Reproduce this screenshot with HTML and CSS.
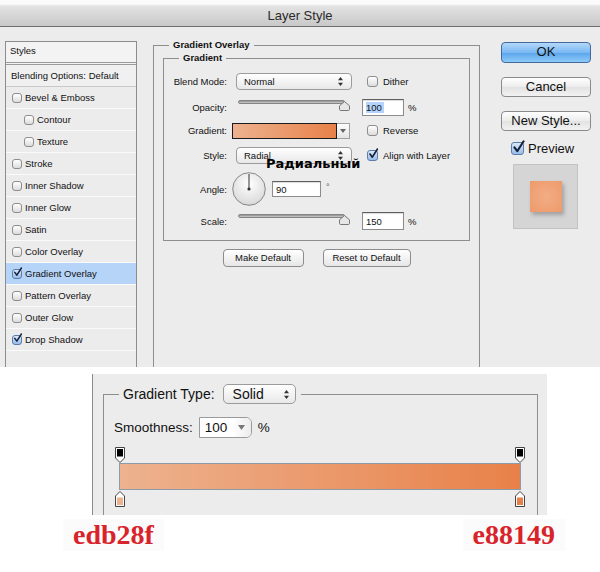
FILE: index.html
```html
<!DOCTYPE html>
<html lang="en">
<head>
    <meta charset="UTF-8">
    <meta name="viewport" content="width=device-width, initial-scale=1.0">
    <title>Layer Style</title>
    <link rel="stylesheet" href="styles.css">
</head>
<body>
    <div class="dialog">
        <div class="titlebar">Layer Style</div>
        <div class="dialog-body">
            <div class="styles-list">
                <div class="list-head">Styles</div>
                <div class="list-blend">Blending Options: Default</div>
                <div class="list-item"><span class="cb"></span>Bevel &amp; Emboss</div>
                <div class="list-item sub"><span class="cb"></span>Contour</div>
                <div class="list-item sub"><span class="cb"></span>Texture</div>
                <div class="list-item"><span class="cb"></span>Stroke</div>
                <div class="list-item"><span class="cb"></span>Inner Shadow</div>
                <div class="list-item"><span class="cb"></span>Inner Glow</div>
                <div class="list-item"><span class="cb"></span>Satin</div>
                <div class="list-item"><span class="cb"></span>Color Overlay</div>
                <div class="list-item selected"><span class="cb on"><svg viewBox="0 0 12 13"><path d="M2.3 7 L5 10.6 L11 1.2"/></svg></span>Gradient Overlay</div>
                <div class="list-item"><span class="cb"></span>Pattern Overlay</div>
                <div class="list-item"><span class="cb"></span>Outer Glow</div>
                <div class="list-item"><span class="cb on"><svg viewBox="0 0 12 13"><path d="M2.3 7 L5 10.6 L11 1.2"/></svg></span>Drop Shadow</div>
            </div>

            <fieldset class="group overlay-group">
                <legend>Gradient Overlay</legend>
                <fieldset class="group gradient-group">
                    <legend>Gradient</legend>

                    <div class="field-row r-blend">
                        <label>Blend Mode:</label>
                        <div class="popup">Normal
                            <svg class="updown" viewBox="0 0 5 9"><path d="M2.5 0 L5 3.2 H0 Z M2.5 9 L5 5.8 H0 Z"/></svg>
                        </div>
                        <div class="check"><span class="cb mid"></span>Dither</div>
                    </div>

                    <div class="field-row r-opacity">
                        <label>Opacity:</label>
                        <div class="slider">
                            <div class="track"></div>
                            <svg class="thumb" viewBox="0 0 11 10"><path d="M5.5 0.5 L10.5 4.8 V8.3 Q10.5 9.5 9.3 9.5 H1.7 Q0.5 9.5 0.5 8.3 V4.8 Z"/></svg>
                        </div>
                        <div class="num"><span class="textbox w-pct"><span class="hl">100</span></span><span>%</span></div>
                    </div>

                    <div class="field-row r-gradient">
                        <label>Gradient:</label>
                        <div class="grad-pick">
                            <span class="swatch"></span>
                            <span class="drop"><svg viewBox="0 0 6 4"><path d="M0 0 H6 L3 4 Z"/></svg></span>
                        </div>
                        <div class="check"><span class="cb mid"></span>Reverse</div>
                    </div>

                    <div class="field-row r-style">
                        <label>Style:</label>
                        <div class="popup">Radial
                            <svg class="updown" viewBox="0 0 5 9"><path d="M2.5 0 L5 3.2 H0 Z M2.5 9 L5 5.8 H0 Z"/></svg>
                        </div>
                        <div class="check"><span class="cb mid on"><svg viewBox="0 0 12 13"><path d="M2.3 7 L5 10.6 L11 1.2"/></svg></span>Align with Layer</div>
                        <span class="annot">Радиальный</span>
                    </div>

                    <div class="field-row r-angle">
                        <label>Angle:</label>
                        <div class="angle">
                            <svg class="dial" viewBox="0 0 34 34">
                                <defs>
                                    <radialGradient id="dialFill" cx="50%" cy="35%" r="65%">
                                        <stop offset="0" stop-color="#ffffff"/>
                                        <stop offset="1" stop-color="#d9d9d9"/>
                                    </radialGradient>
                                </defs>
                                <circle cx="17" cy="17" r="16.3" fill="url(#dialFill)" stroke="#6f6f6f" stroke-width="0.8"/>
                                <line x1="17" y1="17" x2="17" y2="2" stroke="#333" stroke-width="1"/>
                                <circle cx="17" cy="17" r="1.6" fill="#333"/>
                            </svg>
                            <span class="textbox w-angle">90</span>
                            <span class="deg">°</span>
                        </div>
                    </div>

                    <div class="field-row r-scale">
                        <label>Scale:</label>
                        <div class="slider">
                            <div class="track"></div>
                            <svg class="thumb" viewBox="0 0 11 10"><path d="M5.5 0.5 L10.5 4.8 V8.3 Q10.5 9.5 9.3 9.5 H1.7 Q0.5 9.5 0.5 8.3 V4.8 Z"/></svg>
                        </div>
                        <div class="num"><span class="textbox w-pct tall">150</span><span>%</span></div>
                    </div>
                </fieldset>

                <div class="default-btns">
                    <span class="btn-small w-make">Make Default</span>
                    <span class="btn-small w-reset">Reset to Default</span>
                </div>
            </fieldset>

            <div class="side">
                <span class="btn ok">OK</span>
                <span class="btn">Cancel</span>
                <span class="btn">New Style...</span>
                <div class="preview-check"><span class="cb big on"><svg viewBox="0 0 12 13"><path d="M2.3 7 L5 10.6 L11 1.2"/></svg></span>Preview</div>
                <div class="preview-box"><span class="preview-swatch"></span></div>
            </div>
        </div>
    </div>

    <div class="editor">
        <fieldset class="type-group">
            <legend>
                <span>Gradient Type:</span>
                <span class="popup big-popup">Solid
                    <svg class="updown" viewBox="0 0 5 9"><path d="M2.5 0 L5 3.2 H0 Z M2.5 9 L5 5.8 H0 Z"/></svg>
                </span>
            </legend>
            <div class="smooth">
                <span>Smoothness:</span>
                <span class="combo"><span class="combo-val">100</span><span class="combo-arrow"><svg viewBox="0 0 7 5"><path d="M0 0 H7 L3.5 5 Z"/></svg></span></span>
                <span>%</span>
            </div>
            <div class="stops">
                <svg class="stop" viewBox="0 0 10 16"><path d="M0.5 0.5 H9.5 V11 L5 15.5 L0.5 11 Z" fill="#fff" stroke="#444"/><rect x="2" y="2" width="6" height="7.5" fill="#000"/></svg>
                <svg class="stop" viewBox="0 0 10 16"><path d="M0.5 0.5 H9.5 V11 L5 15.5 L0.5 11 Z" fill="#fff" stroke="#444"/><rect x="2" y="2" width="6" height="7.5" fill="#000"/></svg>
            </div>
            <div class="bar"></div>
            <div class="stops low">
                <svg class="stop" viewBox="0 0 10 16"><path d="M5 0.5 L9.5 5 V15.5 H0.5 V5 Z" fill="#fff" stroke="#444"/><rect x="2" y="6.5" width="6" height="7.5" fill="#edb28f"/></svg>
                <svg class="stop" viewBox="0 0 10 16"><path d="M5 0.5 L9.5 5 V15.5 H0.5 V5 Z" fill="#fff" stroke="#444"/><rect x="2" y="6.5" width="6" height="7.5" fill="#e88149"/></svg>
            </div>
        </fieldset>
    </div>

    <div class="hex-row">
        <span class="hex">edb28f</span>
        <span class="hex">e88149</span>
    </div>
</body>
</html>
```

FILE: styles.css
```css
* {
    box-sizing: border-box;
}
body {
    margin: 0;
    width: 600px;
    height: 572px;
    overflow: hidden;
    background-color: #fff;
    font-family: "Liberation Sans", Arial, sans-serif;
    color: #111;
}
.dialog {
    height: 367px;
    background-color: #ececec;
}
.titlebar {
    height: 27px;
    padding-top: 5px;
    border-bottom: 1px solid #6f6f6f;
    background: linear-gradient(#fbfbfb 0, #fbfbfb 4px, #e3e3e3 6px, #c8c8c8 100%);
    text-align: center;
    font-size: 13px;
    line-height: 22px;
    color: #2a2a2a;
}
.dialog-body {
    display: flex;
    align-items: flex-start;
    height: 340px;
    overflow: hidden;
    padding: 12px 0 0 5px;
}

/* left list */
.styles-list {
    flex: none;
    width: 132px;
    height: 340px;
    margin-top: 2px;
    border: 1px solid #8c8c8c;
    border-bottom: none;
    background-color: #ececec;
    font-size: 9.5px;
}
.list-head {
    height: 23px;
    padding-left: 4px;
    line-height: 18px;
    border-bottom: 3px double #9a9a9a;
    background-color: #f3f3f3;
}
.list-blend {
    height: 22px;
    padding-left: 5px;
    line-height: 21px;
    border-bottom: 1px solid #c9c9c9;
    background-color: #f0f0f0;
}
.list-item {
    display: flex;
    align-items: center;
    height: 22px;
    padding-left: 6px;
    border-bottom: 1px solid #fafafa;
}
.list-item.sub {
    padding-left: 18px;
}
.list-item.selected {
    background-color: #b6d4f7;
}

/* checkboxes */
.cb {
    position: relative;
    flex: none;
    width: 10px;
    height: 10px;
    margin-right: 3px;
    border: 1px solid #8d8d8d;
    border-radius: 3px;
    background: linear-gradient(#ffffff, #dcdcdc);
}
.cb.mid {
    width: 11px;
    height: 11px;
    margin-right: 5px;
}
.cb.big {
    width: 13px;
    height: 13px;
    margin-right: 4px;
}
.cb.on {
    border-color: #5b7dab;
    background: linear-gradient(#dbe9fb, #98bbe8);
}
.cb svg {
    position: absolute;
    left: 0;
    top: -3px;
    width: 115%;
    height: 125%;
    fill: none;
    stroke: #16213a;
    stroke-width: 2;
    stroke-linecap: round;
    stroke-linejoin: round;
}

/* middle fieldsets */
fieldset.group {
    margin: 0;
    min-width: 0;
    border: 1px solid #8e8e8e;
}
fieldset.group legend {
    font-size: 9.5px;
    font-weight: bold;
    line-height: 12px;
    padding: 0 4px;
}
fieldset.overlay-group {
    flex: none;
    width: 327px;
    height: 360px;
    margin-left: 16px;
    padding: 1px 9px 0;
    border-bottom: none;
}
.overlay-group > legend {
    margin-left: 6px;
}
fieldset.gradient-group {
    padding: 5px 0 6px;
}
.gradient-group > legend {
    margin-left: 15px;
}
.field-row {
    position: relative;
    display: grid;
    grid-template-columns: 72px 126px auto;
    align-items: center;
    font-size: 9.5px;
}
.field-row label {
    padding-right: 9px;
    text-align: right;
}
.r-blend { height: 25px; }
.r-opacity { height: 26px; }
.r-gradient { height: 21px; }
.r-style { height: 29px; }
.r-angle { height: 38px; }
.r-scale { height: 26px; }

.popup {
    position: relative;
    display: flex;
    align-items: center;
    width: 116px;
    height: 17px;
    padding-left: 7px;
    border: 1px solid #9b9b9b;
    border-radius: 4px;
    background: linear-gradient(#ffffff, #e8e8e8);
}
.updown {
    position: absolute;
    right: 8px;
    top: 50%;
    width: 5px;
    height: 9px;
    margin-top: -4.5px;
    fill: #333;
}
.check {
    display: flex;
    align-items: center;
    padding-left: 5px;
    white-space: nowrap;
}
.slider {
    position: relative;
    width: 112px;
    height: 11px;
    margin-left: 2px;
    margin-top: -3px;
}
.track {
    width: 107px;
    height: 4px;
    border: 1px solid #858585;
    border-radius: 2px;
    background: linear-gradient(#8c8c8c, #cfcfcf);
}
.thumb {
    position: absolute;
    right: 0;
    top: 1px;
    width: 11px;
    height: 10px;
    fill: #e6e6e6;
    stroke: #777;
    stroke-width: 1;
}
.num {
    display: flex;
    align-items: center;
    gap: 4px;
}
.textbox {
    display: flex;
    align-items: center;
    height: 17px;
    padding-left: 3px;
    border: 1px solid #8c8c8c;
    border-top-color: #5f5f5f;
    background-color: #fff;
    box-shadow: inset 0 1px 1px rgba(0,0,0,0.15);
}
.w-pct { width: 42px; }
.w-pct.tall { height: 18px; }
.w-angle { width: 49px; height: 16px; }
.hl {
    background-color: #b3d3fd;
    padding: 0 2px 0 0;
}
.grad-pick {
    display: flex;
    width: 118px;
    height: 16px;
    margin-left: -4px;
}
.swatch {
    flex: 1;
    border: 1px solid #1c1c1c;
    background: linear-gradient(to right, #edb28f, #e88149);
}
.drop {
    display: flex;
    align-items: center;
    justify-content: center;
    width: 13px;
    border: 1px solid #a0a0a0;
    border-left: none;
    background: linear-gradient(#fdfdfd, #e4e4e4);
}
.drop svg {
    width: 6px;
    height: 4px;
    fill: #666;
}
.annot {
    position: absolute;
    left: 102px;
    top: 15px;
    font-family: "DejaVu Sans", sans-serif;
    font-weight: bold;
    font-size: 13px;
    line-height: 15px;
    color: #000;
}
.angle {
    display: flex;
    align-items: center;
    margin-left: -4px;
}
.dial {
    width: 34px;
    height: 34px;
    margin-right: 6px;
}
.deg {
    align-self: flex-start;
    margin: 10px 0 0 5px;
    font-size: 9px;
    color: #555;
}
.default-btns {
    display: flex;
    justify-content: center;
    gap: 19px;
    margin-top: 8px;
}
.btn-small {
    height: 18px;
    border: 1px solid #8c8c8c;
    border-radius: 4px;
    background: linear-gradient(#ffffff, #e6e6e6);
    font-size: 9.5px;
    line-height: 16px;
    text-align: center;
}
.w-make { width: 81px; }
.w-reset { width: 88px; }

/* right column */
.side {
    flex: none;
    display: flex;
    flex-direction: column;
    width: 90px;
    margin-left: 21px;
    padding-top: 3px;
}
.btn {
    height: 20px;
    margin-bottom: 14px;
    border: 1px solid #8a8a8a;
    border-radius: 4px;
    background: linear-gradient(#ffffff, #ececec 50%, #e2e2e2 51%, #f2f2f2);
    font-size: 13px;
    line-height: 18px;
    text-align: center;
}
.btn.ok {
    height: 21px;
    border-color: #44699b;
    background: linear-gradient(#b3d8fb, #7ab8f2 50%, #5ba4ec 51%, #8ccbf8);
}
.btn:nth-child(3) {
    margin-bottom: 10px;
}
.preview-check {
    display: flex;
    align-items: center;
    height: 14px;
    margin-left: 10px;
    font-size: 13px;
}
.preview-box {
    display: flex;
    align-items: center;
    justify-content: center;
    width: 65px;
    height: 65px;
    margin: 9px 0 0 12px;
    border: 1px solid #c2c2c2;
    background-color: #d5d5d5;
}
.preview-swatch {
    width: 32px;
    height: 31px;
    background: radial-gradient(circle, #f2ad85, #ee9a6a);
    box-shadow: 2px 3px 4px rgba(0,0,0,0.25);
}

/* gradient editor */
.editor {
    width: 455px;
    height: 141px;
    margin: 7px 0 0 92px;
    padding: 10px 9px 0 10px;
    overflow: hidden;
    border-left: 1px solid #8a8a8a;
    background-color: #ececec;
}
.type-group {
    height: 200px;
    margin: 0;
    min-width: 0;
    padding: 12px 0 0 10px;
    border: 1px solid #8e8e8e;
    border-bottom: none;
}
.type-group legend {
    display: flex;
    align-items: center;
    gap: 8px;
    margin-left: 5px;
    padding: 0 5px 0 4px;
    font-size: 14px;
}
.big-popup {
    width: 73px;
    height: 20px;
    padding-left: 9px;
    border-radius: 5px;
    font-size: 14px;
}
.big-popup .updown {
    right: 6px;
}
.smooth {
    display: flex;
    align-items: center;
    gap: 6px;
    height: 23px;
    font-size: 13.5px;
}
.combo {
    display: flex;
    width: 53px;
    height: 21px;
    border: 1px solid #9a9a9a;
    border-radius: 0 6px 6px 0;
    background-color: #fff;
}
.combo-val {
    flex: 1;
    padding-left: 5px;
    line-height: 19px;
}
.combo-arrow {
    display: flex;
    align-items: center;
    justify-content: center;
    width: 18px;
    border-radius: 0 5px 5px 0;
    background: linear-gradient(to right, #ffffff, #ececec);
}
.combo-arrow svg {
    width: 7px;
    height: 5px;
    fill: #777;
}
.stops {
    display: flex;
    justify-content: space-between;
    width: 410px;
    height: 16px;
    margin: 8px 0 0 1px;
}
.stops.low {
    height: 17px;
    margin-top: 1px;
}
.stop {
    width: 10px;
    height: 16px;
}
.bar {
    width: 402px;
    height: 27px;
    margin-left: 5px;
    border: 1px solid #8d9ba9;
    background: linear-gradient(to right, #edb28f, #e88149);
}
.hex-row {
    display: flex;
    justify-content: space-between;
    margin-top: 4px;
    padding: 0 35px 0 63px;
}
.hex {
    padding: 0 10px;
    background-color: #fbfbfb;
    font-family: "Liberation Serif", "Times New Roman", serif;
    font-weight: bold;
    font-size: 28px;
    line-height: 32px;
    color: #d9232b;
}
```
